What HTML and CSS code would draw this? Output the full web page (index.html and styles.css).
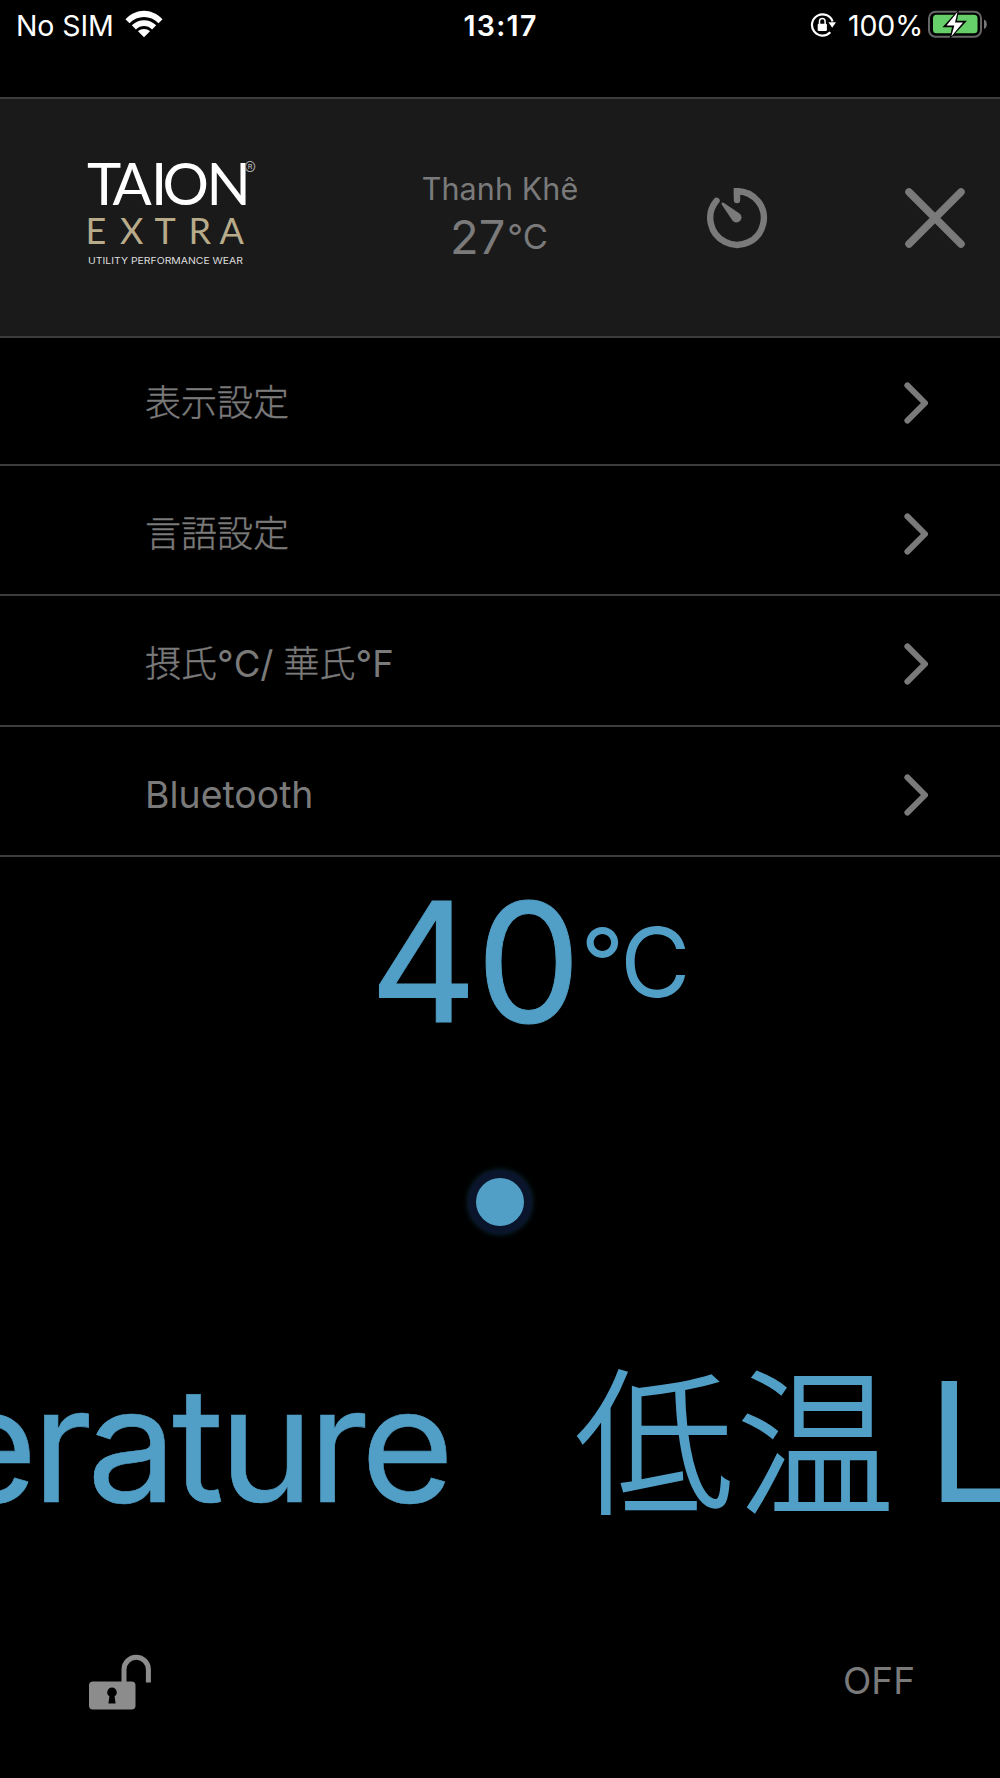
FILE: index.html
```html
<!DOCTYPE html>
<html lang="ja">
<head>
<meta charset="utf-8">
<title>TAION EXTRA</title>
<link rel="stylesheet" href="styles.css">
</head>
<body>
<div class="status">
  <div class="status-left">
    <span class="carrier">No SIM</span>
    <svg class="wifi" width="38" height="28" viewBox="0 0 38 28" fill="#fff">
      <path d="M0.5 9.2C11-2.2 27-2.2 37.500 9.200L33.500 13.200C25.500 4.800 12.500 4.800 4.500 13.200Z"/>
      <path d="M6.800 15.300C13.600 8.400 24.400 8.400 31.200 15.300L27.100 19.400C22.500 14.800 15.500 14.800 10.900 19.400Z"/>
      <path d="M13 21.300C16.400 18.200 21.600 18.200 25 21.300L19 27.300Z"/>
    </svg>
  </div>
  <span class="clock">13:17</span>
  <div class="status-right">
    <svg class="rotation" width="26" height="26" viewBox="0 0 26 26">
      <path d="M22.600 9.500A10.600 10.600 0 1 0 20.300 20.200" fill="none" stroke="#fff" stroke-width="2.200"/>
      <path d="M18.400 10.200H26L22.200 15.800Z" fill="#fff"/>
      <rect x="7.700" y="11.800" width="9.200" height="7.200" rx="1" fill="#fff"/>
      <path d="M9.500 12V9.200a2.800 2.800 0 0 1 5.600 0V12" fill="none" stroke="#fff" stroke-width="1.500"/>
    </svg>
    <span class="percent">100%</span>
    <svg class="battery" width="59" height="30" viewBox="0 0 59 30">
      <rect x="1" y="1.700" width="52" height="25" rx="6.500" fill="none" stroke="#666" stroke-width="2"/>
      <path d="M56 9.500v9.500c1.900-.8 2.800-2.600 2.800-4.750S57.900 10.300 56 9.500Z" fill="#777"/>
      <rect x="5" y="4.700" width="44.500" height="18.500" rx="3.500" fill="#66cf69"/>
      <path d="M31.200 -1L14.500 17.200H24L21.500 29.500L39 10.800H29Z" fill="#000"/>
      <path d="M29.500 2L18.500 15.500H26.300L23.300 26.500L35 12.600H27Z" fill="#fff"/>
    </svg>
  </div>
</div>

<header class="header">
  <svg class="logo" width="172" height="106" viewBox="0 0 172 106">
    <text class="logo-name" x="-1 24.500 63 74.500 118.500" y="43">TAION</text>
    <text class="logo-reg" x="156" y="13">®</text>
    <text class="logo-line" x="-2.500 32 66.500 100.500 131.500" y="82">EXTRA</text>
    <text class="logo-tag" x="0" y="102" textLength="155" lengthAdjust="spacingAndGlyphs">UTILITY PERFORMANCE WEAR</text>
  </svg>
  <div class="weather">
    <div class="city">Thanh Khê</div>
    <div class="local-temp"><span class="local-value">27</span><span class="local-unit">°C</span></div>
  </div>
  <svg class="timer" width="62" height="62" viewBox="0 0 62 62">
    <path d="M31 13V4.200A26.800 26.800 0 1 1 10.500 13.800" fill="none" stroke="#7a7a7a" stroke-width="6.400" stroke-linecap="round"/>
    <path d="M27.800 1H34V10H27.800Z" fill="#7a7a7a"/>
    <path d="M15.800 15.700Q16.500 15 18 16L33.500 26.500A5 5 0 1 1 26.500 33.500L16 18Q15 16.500 15.800 15.700Z" fill="#7a7a7a"/>
  </svg>
  <svg class="close" width="60" height="60" viewBox="0 0 60 60">
    <path d="M4 4L56 56M56 4L4 56" stroke="#7a7a7a" stroke-width="7.500" stroke-linecap="round"/>
  </svg>
</header>

<nav class="menu">
  <div class="row"><span>表示設定</span><svg class="chevron" viewBox="0 0 24 42"><path d="M3.400 3.400L21 21L3.400 38.600"/></svg></div>
  <div class="row"><span>言語設定</span><svg class="chevron" viewBox="0 0 24 42"><path d="M3.400 3.400L21 21L3.400 38.600"/></svg></div>
  <div class="row"><span>摂氏<span class="latin">°C/</span> 華氏<span class="latin">°F</span></span><svg class="chevron" viewBox="0 0 24 42"><path d="M3.400 3.400L21 21L3.400 38.600"/></svg></div>
  <div class="row"><span class="bluetooth">Bluetooth</span><svg class="chevron" viewBox="0 0 24 42"><path d="M3.400 3.400L21 21L3.400 38.600"/></svg></div>
</nav>

<main class="heater">
  <div class="temp"><span class="temp-value">40</span><span class="temp-unit">°C</span></div>
  <div class="dot"></div>
  <div class="marquee"><span class="previous">erature</span><span class="kanji">低温</span><span class="next">L</span></div>
</main>

<footer class="footer">
  <svg class="lock" width="64" height="58" viewBox="0 0 64 58">
    <path d="M36 30V16.500a12.200 12.200 0 0 1 24.400 0V29.500" fill="none" stroke="#8c8c8c" stroke-width="5"/>
    <rect x="1" y="28.500" width="46.500" height="28" rx="4" fill="#8c8c8c"/>
    <path d="M24 34.500a4.800 4.800 0 0 1 2.600 8.800l1 7.200h-7.200l1-7.200A4.800 4.800 0 0 1 24 34.500Z" fill="#000"/>
  </svg>
  <span class="off">OFF</span>
</footer>
</body>
</html>
```
FILE: styles.css
```css
* { box-sizing: border-box; }
body {
  margin: 0;
  width: 1000px;
  height: 1778px;
  overflow: hidden;
  background: #000;
  color: #7a7a7a;
  font-family: Inter, "Noto Sans CJK JP", sans-serif;
  display: flex;
  flex-direction: column;
}
svg { display: block; flex: none; }
span { white-space: nowrap; }

.status {
  height: 97px;
  padding: 0 13px 0 16px;
  display: grid;
  grid-template-columns: 1fr auto 1fr;
  align-items: start;
  color: #fff;
  font-size: 28.5px;
  line-height: 51px;
}
.status-left, .status-right { display: flex; }
.status-right { justify-content: flex-end; }
.carrier { width: 108.500px; letter-spacing: -0.1px; }
.wifi { margin-top: 10px; }
.clock { font-weight: 600; letter-spacing: 1.300px; margin-right: 2px; }
.rotation { margin: 12px 12px 0 0; }
.percent { width: 80px; letter-spacing: -0.1px; }
.battery { margin-top: 10px; }

.header {
  height: 241px;
  background: #1a1a1a;
  border-top: 2px solid #3c3c3c;
  border-bottom: 2px solid #3c3c3c;
  padding: 0 35px 0 88px;
  display: flex;
}
.logo { margin-top: 63px; overflow: visible; }
.logo-name { font-family: Lato, sans-serif; font-size: 58px; fill: #fff; }
.logo-line { font-family: Lato, sans-serif; font-size: 36px; fill: #b8ab8a; }
.logo-reg { font-size: 18px; font-weight: 300; fill: #aaa; }
.logo-tag { font-size: 8.500px; fill: #ddd; }
.weather {
  width: 240px;
  margin: 70px 0 0 120px;
  display: flex;
  flex-direction: column;
  align-items: center;
}
.city { font-size: 30.500px; line-height: 40px; height: 40px; letter-spacing: 0.1px; }
.local-temp { display: flex; margin: 5px 2px 0 0; }
.local-value { font-size: 47px; line-height: 46px; }
.local-unit { font-size: 34.500px; line-height: 45px; margin-left: 2px; }
.timer { margin: 88px 0 0 86px; }
.close { margin: 89px 0 0 auto; }

.menu { display: flex; flex-direction: column; }
.row {
  height: 130.400px;
  padding: 8px 72px 0 145px;
  border-bottom: 2px solid #3c3c3c;
  display: flex;
  align-items: center;
  justify-content: space-between;
  font-size: 36px;
  font-weight: 300;
  line-height: 50px;
  -webkit-text-stroke: 0.400px #7a7a7a;
}
.row:first-child { height: 127.900px; padding-top: 5px; }
.latin { font-size: 36.500px; font-weight: 400; -webkit-text-stroke: 0; }
.bluetooth { font-size: 37.400px; font-weight: 400; -webkit-text-stroke: 0; }
.chevron { width: 24px; height: 42px; fill: none; stroke: #7a7a7a; stroke-width: 6; stroke-linecap: round; stroke-linejoin: round; }

.heater { color: #519fc6; display: flex; flex-direction: column; align-items: center; }
.temp { display: flex; height: 200px; margin-top: 5px; padding-left: 57px; }
.temp-value { font-size: 166px; line-height: 200px; letter-spacing: -0.500px; -webkit-text-stroke: 1px #519fc6; }
.temp-unit { font-size: 96px; line-height: 200px; letter-spacing: -3px; }
.dot {
  width: 48px;
  height: 48px;
  margin-top: 116px;
  border-radius: 50%;
  background: #519fc6;
  box-shadow: 0 0 0 8px #0a142b, 0 0 5px 9px #0b2230;
}
.marquee {
  width: 1000px;
  height: 200px;
  margin-top: 116px;
  overflow: hidden;
  display: flex;
  line-height: 200px;
  align-items: baseline;
}
.marquee span { flex: none; }
.previous { width: 631px; margin-left: -56px; font-size: 160px; letter-spacing: -5.200px; -webkit-text-stroke: 0.600px #519fc6; }
.kanji { width: 352px; font-size: 158px; font-weight: 300; letter-spacing: 3.500px; -webkit-text-stroke: 2.200px #519fc6; }
.next { font-size: 166px; }

.footer { display: flex; justify-content: space-between; margin-top: 111px; padding: 0 85px 0 88px; }
.off { font-size: 37px; line-height: 55px; }
```
